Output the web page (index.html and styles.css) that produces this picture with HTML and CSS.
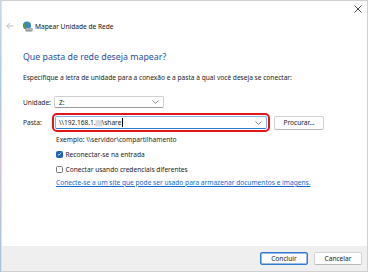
FILE: index.html
```html
<!DOCTYPE html>
<html lang="pt-BR">
<head>
<meta charset="utf-8">
<link rel="stylesheet" href="styles.css">
</head>
<body>
<div class="desk">
  <div class="window">
    <div class="topbar">
      <svg class="close" width="8" height="8" viewBox="0 0 8 8"><path d="M0.5 0.5L7.5 7.5M7.5 0.5L0.5 7.5" stroke="#333" stroke-width="0.9"/></svg>
    </div>
    <div class="header">
      <svg class="back" width="8" height="8" viewBox="0 0 8 8"><path d="M7.5 4H0.8M3.8 1L0.8 4L3.8 7" stroke="#b5b5b5" stroke-width="0.9" fill="none"/></svg>
      <svg class="appicon" width="11" height="11" viewBox="0 0 11 11">
        <circle cx="5" cy="4.5" r="4" fill="#3a86c8"/>
        <path d="M2 2.5c1 .2 1.6 1 1.4 2 -.2.8.6 1.2 1.2 1.6L4 8.3C2.4 7.8 1.2 6.4 1 4.6z" fill="#4aa23a"/>
        <path d="M6 1c1 .5 1.4 1.3 1 2-.4.6-1.2.4-1.5 1.2L5.2 1.1z" fill="#4aa23a"/>
        <rect x="3.5" y="7" width="7" height="3.5" rx="0.6" fill="#8a8f96"/>
        <rect x="4" y="7.5" width="6" height="1.2" fill="#c9ccd0"/>
        <circle cx="9" cy="9.5" r="0.5" fill="#6ee05a"/>
      </svg>
      <span class="title">Mapear Unidade de Rede</span>
    </div>
    <div class="content">
      <h1 class="heading">Que pasta de rede deseja mapear?</h1>
      <p class="intro">Especifique a letra de unidade para a conexão e a pasta à qual você deseja se conectar:</p>
      <div class="row row-drive">
        <span class="label">Unidade:</span>
        <div class="select">
          <span>Z:</span>
          <svg class="chev" width="7" height="4" viewBox="0 0 7 4"><path d="M0.5 0.5L3.5 3.3L6.5 0.5" stroke="#666" stroke-width="0.8" fill="none"/></svg>
        </div>
      </div>
      <div class="row row-folder">
        <span class="label label-folder">Pasta:</span>
        <div class="highlight">
          <div class="input">
            <span class="value">\\192.168.1.<span class="blur">&#9608;&#9608;</span>\share<span class="caret"></span></span>
            <svg class="chev" width="7" height="4" viewBox="0 0 7 4"><path d="M0.5 0.5L3.5 3.3L6.5 0.5" stroke="#666" stroke-width="0.8" fill="none"/></svg>
          </div>
        </div>
        <button class="btn browse">Procurar...</button>
      </div>
      <div class="sub">
        <p class="example">Exemplo: \\servidor\compartilhamento</p>
        <label class="check"><span class="box checked"><svg width="6" height="6" viewBox="0 0 6 6"><path d="M1 3.2L2.4 4.5L5 1.5" stroke="#fff" stroke-width="0.9" fill="none"/></svg></span>Reconectar-se na entrada</label>
        <label class="check"><span class="box"></span>Conectar usando credenciais diferentes</label>
        <a class="link" href="#">Conecte-se a um site que pode ser usado para armazenar documentos e imagens.</a>
      </div>
    </div>
    <div class="footer">
      <button class="btn primary">Concluir</button>
      <button class="btn">Cancelar</button>
    </div>
  </div>
</div>
</body>
</html>
```
FILE: styles.css
```css
* { box-sizing: border-box; }
html, body { margin: 0; padding: 0; }
body {
  width: 368px;
  height: 272px;
  overflow: hidden;
  font-family: "Noto Sans", "Open Sans", sans-serif;
  font-size: 6.6px;
  color: #1b1b1b;
}
.desk {
  width: 368px;
  height: 272px;
  background: linear-gradient(#c9d9e6, #a9c8de 30%, #d2c4d6 60%, #9fc4dc);
  padding-left: 1px;
}
.window {
  width: 367px;
  height: 272px;
  background: #fff;
  border: 1px solid #cfcfcf;
  border-left-color: #e2e2e2;
  display: flex;
  flex-direction: column;
}
.topbar {
  height: 16px;
  display: flex;
  justify-content: flex-end;
  align-items: center;
  padding-right: 5px;
}
.close { display: block; margin-top: -1px; }
.header {
  height: 18px;
  display: flex;
  align-items: center;
  padding-left: 4px;
}
.back { margin-right: 8px; }
.appicon { margin-right: 2px; }
.title { font-size: 6.6px; color: #111; }
.content {
  padding-left: 21px;
  padding-top: 16px;
}
.heading {
  margin: 0;
  font-size: 8.8px;
  font-weight: normal;
  color: #1e4fa6;
  line-height: 12px;
}
.intro {
  margin: 10px 0 0;
  line-height: 10px;
}
.row {
  display: flex;
  align-items: center;
}
.row-drive { margin-top: 12px; height: 14px; }
.row-folder { margin-top: 4px; height: 19px; }
.label { width: 31px; }
.label-folder { width: 29px; }
.select {
  width: 110px;
  height: 12px;
  border: 1px solid #d0d0d0;
  border-bottom-color: #9a9a9a;
  border-radius: 2px;
  display: flex;
  align-items: center;
  justify-content: space-between;
  padding: 0 4px 0 4px;
}
.highlight {
  width: 218px;
  height: 19px;
  border: 2px solid #e4141b;
  border-radius: 5px;
  padding: 1px;
}
.input {
  height: 100%;
  border: 1px solid #7fb4e0;
  border-bottom: 1.5px solid #2b79c7;
  border-radius: 2px;
  display: flex;
  align-items: center;
  justify-content: space-between;
  padding: 0 4px 0 3px;
}
.value { display: flex; align-items: center; }
.blur { color: #d8d8d8; font-size: 5px; letter-spacing: -0.5px; }
.caret { display: inline-block; width: 0.8px; height: 9px; background: #000; margin-left: 0.5px; }
.btn {
  font-family: inherit;
  font-size: 6.6px;
  color: #1b1b1b;
  background: #fdfdfd;
  border: 1px solid #d3d3d3;
  border-bottom-color: #b8b8b8;
  border-radius: 2px;
  height: 14px;
  padding: 0;
  line-height: 12px;
}
.browse { width: 50px; margin-left: 4px; }
.sub { padding-left: 33px; }
.example { margin: 3px 0 0; line-height: 10px; }
.check {
  display: flex;
  align-items: center;
  margin-top: 4px;
  height: 10px;
}
.check + .check { margin-top: 5px; }
.box {
  width: 7px;
  height: 7px;
  border: 0.8px solid #7a7a7a;
  border-radius: 1.5px;
  margin-right: 2.5px;
  display: flex;
  align-items: center;
  justify-content: center;
  background: #fbfbfb;
}
.box.checked { background: #1b64b7; border-color: #1b64b7; }
.link {
  display: block;
  margin-top: 4px;
  color: #1169d0;
  text-decoration: underline;
  line-height: 10px;
}
.footer {
  margin-top: auto;
  height: 25px;
  background: #efefef;
  display: flex;
  justify-content: flex-end;
  align-items: center;
  gap: 6px;
  padding-right: 5px;
  padding-bottom: 1px;
}
.footer .btn { width: 48px; height: 13px; flex: none; }
.footer .primary { border-color: #2e7bd0; box-shadow: inset 0 0 0 0.5px #2e7bd0; }
```
